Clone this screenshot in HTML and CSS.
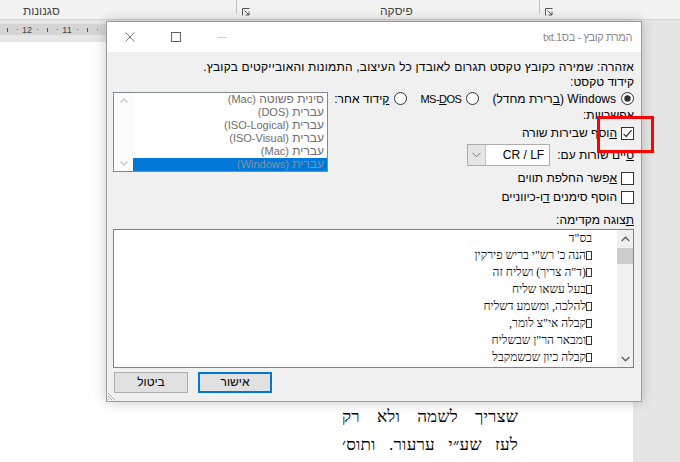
FILE: index.html
```html
<!DOCTYPE html>
<html lang="he">
<head>
<meta charset="utf-8">
<title>המרת קובץ</title>
<link rel="stylesheet" href="styles.css">
</head>
<body>
<div class="screen">
  <div class="ribbon">
    <div class="grp grp-styles"><span class="grp-label">סגנונות</span></div>
    <div class="sep"></div>
    <div class="launch"><svg width="8" height="8" viewBox="0 0 8 8"><path d="M0.5 7.5V0.5H7.5" fill="none" stroke="#555" stroke-width="1"/><path d="M2.5 2.5L6.8 6.8M7 3.5V7H3.5" fill="none" stroke="#555" stroke-width="1"/></svg></div>
    <div class="grp grp-para"><span class="grp-label">פיסקה</span></div>
    <div class="sep"></div>
    <div class="launch"><svg width="8" height="8" viewBox="0 0 8 8"><path d="M0.5 7.5V0.5H7.5" fill="none" stroke="#555" stroke-width="1"/><path d="M2.5 2.5L6.8 6.8M7 3.5V7H3.5" fill="none" stroke="#555" stroke-width="1"/></svg></div>
  </div>

  <div class="workspace">
    <div class="pagecol">
      <div class="ruler">
        <div class="ruler-band">
          <span class="rc"><i class="tick"></i></span>
          <span class="rc"><i class="dot"></i></span>
          <span class="rc num">12</span>
          <span class="rc"><i class="dot"></i></span>
          <span class="rc"><i class="tick"></i></span>
          <span class="rc"><i class="dot"></i></span>
          <span class="rc num">11</span>
          <span class="rc"><i class="dot"></i></span>
          <span class="rc"><i class="tick"></i></span>
          <span class="rc"><i class="dot"></i></span>
        </div>
      </div>
      <div class="page">
        <div class="pagetext">
          <div class="pline">שצריך לשמה ולא רק</div>
          <div class="pline">לעז שע״י ערעור. ותוס׳</div>
        </div>
      </div>
    </div>
    <div class="gutter"></div>
  </div>

  <div class="dialog">
    <div class="titlebar">
      <div class="title">המרת קובץ - בס1.txt</div>
      <div class="wctrls">
        <div class="wbtn"><svg width="10" height="10" viewBox="0 0 10 10"><path d="M0.5 0.5L9.5 9.5M9.5 0.5L0.5 9.5" stroke="#777" stroke-width="1"/></svg></div>
        <div class="wbtn"><svg width="10" height="10" viewBox="0 0 10 10"><rect x="0.5" y="0.5" width="9" height="9" fill="none" stroke="#666" stroke-width="1"/></svg></div>
        <div class="wbtn"><svg width="10" height="10" viewBox="0 0 10 10"><path d="M0 5.5H10" stroke="#cfcfcf" stroke-width="1"/></svg></div>
      </div>
    </div>

    <div class="dbody">
      <div class="row warn">אזהרה: שמירה כקובץ טקסט תגרום לאובדן כל העיצוב, התמונות והאובייקטים בקובץ.</div>
      <div class="row enc-label">קידוד טקסט:</div>

      <div class="cols">
        <div class="opts">
          <div class="radios">
            <div class="radio-item">
              <svg class="radio" width="13" height="13" viewBox="0 0 13 13"><circle cx="6.5" cy="6.5" r="6" fill="#fff" stroke="#333"/><circle cx="6.5" cy="6.5" r="3.2" fill="#333"/></svg>
              <span>Windows (<u>ב</u>רירת מחדל)</span>
            </div>
            <div class="radio-item">
              <svg class="radio" width="13" height="13" viewBox="0 0 13 13"><circle cx="6.5" cy="6.5" r="6" fill="#fff" stroke="#333"/></svg>
              <span class="lat-narrow" dir="ltr">MS-<u>D</u>OS</span>
            </div>
            <div class="radio-item">
              <svg class="radio" width="13" height="13" viewBox="0 0 13 13"><circle cx="6.5" cy="6.5" r="6" fill="#fff" stroke="#333"/></svg>
              <span><u>ק</u>ידוד אחר:</span>
            </div>
          </div>
          <div class="row opt-label">אפשרויות:</div>
          <div class="chk chk1">
            <span class="box"><svg width="11" height="11" viewBox="0 0 11 11"><path d="M1.5 5.8L4.2 8.5L9.6 2.2" fill="none" stroke="#333" stroke-width="1.2"/></svg></span>
            <span><u>ה</u>וסף שבירות שורה</span>
          </div>
          <div class="eol">
            <span><u>ס</u>יים שורות עם:</span>
            <div class="combo">
              <div class="combo-btn"><svg width="9" height="6" viewBox="0 0 9 6"><path d="M0.5 0.8L4.5 4.8L8.5 0.8" fill="none" stroke="#707070" stroke-width="1"/></svg></div>
              <div class="combo-val">CR / LF</div>
            </div>
          </div>
          <div class="chk chk2">
            <span class="box"></span>
            <span><u>א</u>פשר החלפת תווים</span>
          </div>
          <div class="chk chk3">
            <span class="box"></span>
            <span>הוסף סימנים <u>ד</u>ו-כיווניים</span>
          </div>
        </div>

        <div class="listbox">
          <div class="lb-scroll">
            <svg width="8" height="5" viewBox="0 0 8 5"><path d="M0.5 4.5L4 1L7.5 4.5" fill="none" stroke="#c6c6c6" stroke-width="1.2"/></svg>
            <svg width="8" height="5" viewBox="0 0 8 5"><path d="M0.5 0.5L4 4L7.5 0.5" fill="none" stroke="#c6c6c6" stroke-width="1.2"/></svg>
          </div>
          <div class="lb-items">
            <div class="lb-item">סינית פשוטה <span class="lat">(Mac)</span></div>
            <div class="lb-item">עברית <span class="lat">(DOS)</span></div>
            <div class="lb-item">עברית <span class="lat">(ISO-Logical)</span></div>
            <div class="lb-item">עברית <span class="lat">(ISO-Visual)</span></div>
            <div class="lb-item">עברית <span class="lat">(Mac)</span></div>
            <div class="lb-item sel">עברית <span class="lat">(Windows)</span></div>
          </div>
        </div>
      </div>

      <div class="row pv-label"><u>ת</u>צוגה מקדימה:</div>
      <div class="preview">
        <div class="pv-text">
          <div>בס"ד</div>
          <div><span class="tofu"></span>הנה כ' רש"י בריש פירקין</div>
          <div><span class="tofu"></span>(ד"ה צריך) ושליח זה</div>
          <div><span class="tofu"></span>בעל עשאו שליח</div>
          <div><span class="tofu"></span>להלכה, ומשמע דשליח</div>
          <div><span class="tofu"></span>קבלה אי"צ לומר,</div>
          <div><span class="tofu"></span>ומבאר הר"ן שבשליח</div>
          <div><span class="tofu"></span>קבלה כיון שכשמקבל</div>
        </div>
        <div class="pv-scroll">
          <div class="arr"><svg width="9" height="6" viewBox="0 0 9 6"><path d="M0.7 5L4.5 1.2L8.3 5" fill="none" stroke="#606060" stroke-width="1.4"/></svg></div>
          <div class="thumb"></div>
          <div class="track"></div>
          <div class="arr"><svg width="9" height="6" viewBox="0 0 9 6"><path d="M0.7 1L4.5 4.8L8.3 1" fill="none" stroke="#606060" stroke-width="1.4"/></svg></div>
        </div>
      </div>

      <div class="buttons">
        <div class="btn ok">אישור</div>
        <div class="btn">ביטול</div>
      </div>
    </div>
    <svg class="grip" width="10" height="10" viewBox="0 0 10 10"><path d="M1 2L8 9M1 5L5 9M1 8L2 9" stroke="#b0b0b0" stroke-width="1"/></svg>
  </div>

  <div class="annot"></div>
</div>
</body>
</html>
```

FILE: styles.css
```css
body {
  margin: 0;
}

.screen {
  position: relative;
  width: 680px;
  height: 462px;
  overflow: hidden;
  background: #e6e6e6;
  font-family: "Liberation Sans", Arial, sans-serif;
  color: #000;
}

/* ribbon */
.ribbon {
  height: 19px;
  border-bottom: 1px solid #d6d6d6;
  background: #f3f3f3;
  display: flex;
  direction: ltr;
}
.grp {
  display: flex;
  align-items: flex-start;
  box-sizing: border-box;
}
.grp-styles {
  width: 236px;
  padding-left: 23px;
}
.grp-para {
  width: 289px;
  padding-left: 130px;
}
.grp-label {
  font-size: 12px;
  line-height: 14px;
  padding-top: 4px;
  color: #444;
  direction: rtl;
}
.sep {
  width: 1px;
  height: 14px;
  background: #c2c2c2;
}
.launch {
  width: 8px;
  height: 8px;
  margin-left: 5px;
  margin-top: 8px;
}
.launch svg {
  display: block;
}

/* workspace */
.workspace {
  display: flex;
  height: 442px;
}
.pagecol {
  width: 633px;
  display: flex;
  flex-direction: column;
}
.gutter {
  flex: 1;
  background: #e6e6e6;
}
.ruler {
  height: 22px;
  box-sizing: border-box;
  padding-top: 4px;
  background: #e6e6e6;
}
.ruler-band {
  height: 11px;
  background: #d4d4d4;
  display: flex;
  align-items: center;
  padding-left: 2px;
}
.rc {
  width: 10px;
  display: flex;
  justify-content: center;
  align-items: center;
  font-size: 9px;
  color: #444;
}
.tick {
  display: block;
  width: 1px;
  height: 4px;
  background: #555;
}
.dot {
  display: block;
  width: 1px;
  height: 1px;
  background: #666;
}
.page {
  flex: 1;
  background: #fff;
  direction: rtl;
  padding: 361px 115px 0 0;
}
.pagetext {
  width: 176px;
  font-family: "Liberation Serif", "Times New Roman", serif;
  font-size: 17px;
  letter-spacing: 0.2px;
  line-height: 28px;
  color: #000;
}
.pline {
  text-align: justify;
  text-align-last: justify;
  white-space: nowrap;
}

/* dialog */
.dialog {
  position: absolute;
  left: 106px;
  top: 21px;
  width: 536px;
  height: 381px;
  box-sizing: border-box;
  border: 1px solid #9c9c9c;
  background: #f0f0f0;
  box-shadow: 0 0 12px rgba(0, 0, 0, 0.22);
  direction: rtl;
  font-size: 12px;
  display: flex;
  flex-direction: column;
}
.titlebar {
  height: 30px;
  background: #fff;
  display: flex;
  align-items: center;
}
.title {
  padding-right: 9px;
  color: #8a8a8a;
  font-size: 11px;
  letter-spacing: -0.4px;
}
.wctrls {
  margin-right: auto;
  display: flex;
  direction: ltr;
  height: 30px;
}
.wbtn {
  width: 46px;
  height: 30px;
  display: flex;
  align-items: center;
  justify-content: center;
}
.wbtn svg {
  display: block;
}

.dbody {
  flex: 1;
  padding: 7px 7px 0 6px;
  display: flex;
  flex-direction: column;
}
.row {
  white-space: nowrap;
}
.warn {
  height: 16px;
  line-height: 16px;
  letter-spacing: 0.2px;
}
.enc-label {
  height: 15px;
  line-height: 15px;
}
.cols {
  display: flex;
  gap: 6px;
}
.opts {
  width: 300px;
  display: flex;
  flex-direction: column;
}
.radios {
  height: 17px;
  display: flex;
  align-items: center;
  gap: 13px;
}
.radio-item {
  display: flex;
  align-items: center;
  gap: 5px;
  white-space: nowrap;
}
.radio {
  display: block;
}
.lat-narrow {
  font-size: 11px;
  letter-spacing: -0.5px;
}
.lat {
  font-size: 11px;
}
.opt-label {
  height: 16px;
  line-height: 16px;
}
.chk {
  height: 16px;
  display: flex;
  align-items: center;
  gap: 4px;
  white-space: nowrap;
}
.chk1 {
  margin-top: 2px;
}
.chk2 {
  margin-top: 4px;
}
.chk3 {
  margin-top: 3px;
}
.box {
  width: 13px;
  height: 13px;
  box-sizing: border-box;
  border: 1px solid #333;
  background: #fff;
  display: flex;
  align-items: center;
  justify-content: center;
}
.box svg {
  display: block;
}
.eol {
  margin-top: 3px;
  height: 22px;
  display: flex;
  align-items: center;
  gap: 7px;
  white-space: nowrap;
}
.combo {
  width: 83px;
  height: 22px;
  box-sizing: border-box;
  border: 1px solid #adadad;
  background: #fff;
  display: flex;
  direction: ltr;
}
.combo-btn {
  width: 17px;
  background: #e5e5e5;
  border-right: 1px solid #c4c4c4;
  display: flex;
  align-items: center;
  justify-content: center;
}
.combo-val {
  flex: 1;
  text-align: right;
  padding-right: 5px;
  line-height: 20px;
}

.listbox {
  width: 215px;
  height: 80px;
  margin-top: 2px;
  box-sizing: border-box;
  border: 1px solid #828790;
  background: #fff;
  display: flex;
  direction: ltr;
}
.lb-scroll {
  width: 19px;
  background: #fbfbfb;
  display: flex;
  flex-direction: column;
  align-items: center;
  justify-content: space-between;
  padding: 5px 0 5px;
  box-sizing: border-box;
}
.lb-scroll svg {
  display: block;
}
.lb-items {
  flex: 1;
  direction: rtl;
}
.lb-item {
  height: 13px;
  line-height: 13px;
  padding-right: 3px;
  color: #6d6d6d;
  white-space: nowrap;
}
.lb-item.sel {
  background: #0078d7;
  color: #7f95ad;
}

.pv-label {
  margin-top: 7px;
  height: 16px;
  line-height: 16px;
}
.preview {
  margin-top: 1px;
  height: 139px;
  box-sizing: border-box;
  border: 1px solid #828282;
  background: #fff;
  display: flex;
  direction: ltr;
}
.pv-text {
  flex: 1;
  direction: rtl;
  text-align: right;
  padding-right: 25px;
  font-family: "Liberation Serif", "Times New Roman", serif;
  font-size: 12px;
  line-height: 17px;
  color: #111;
  overflow: hidden;
  white-space: nowrap;
}
.tofu {
  display: inline-block;
  width: 6px;
  height: 9px;
  box-sizing: border-box;
  border: 1px solid #333;
  vertical-align: -1px;
}
.pv-scroll {
  width: 16px;
  background: #f0f0f0;
  display: flex;
  flex-direction: column;
}
.arr {
  height: 17px;
  display: flex;
  align-items: center;
  justify-content: center;
}
.arr svg {
  display: block;
}
.thumb {
  height: 16px;
  margin-top: 1px;
  background: #cdcdcd;
}
.track {
  flex: 1;
}

.buttons {
  margin-top: 4px;
  display: flex;
  gap: 10px;
  justify-content: flex-end;
  padding-left: 1px;
}
.btn {
  width: 74px;
  height: 21px;
  box-sizing: border-box;
  border: 1px solid #adadad;
  background: #e1e1e1;
  text-align: center;
  line-height: 19px;
}
.btn.ok {
  border: 2px solid #0078d7;
  line-height: 17px;
}
.grip {
  position: absolute;
  left: 0;
  bottom: 0;
  display: block;
}

.annot {
  position: absolute;
  left: 597px;
  top: 116px;
  width: 57px;
  height: 37px;
  box-sizing: border-box;
  border: 3px solid #ff0000;
}
```
